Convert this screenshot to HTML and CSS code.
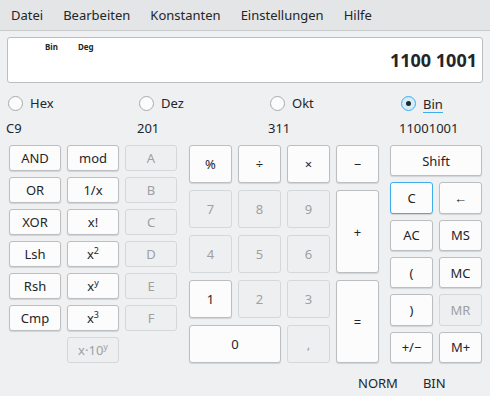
FILE: index.html
```html
<!DOCTYPE html>
<html lang="de">
<head>
  <meta charset="UTF-8" />
  <title>Rechner</title>
  <link rel="stylesheet" href="styles.css">
</head>
<body>

  <header class="menubar">
    <span>Datei</span>
    <span>Bearbeiten</span>
    <span>Konstanten</span>
    <span>Einstellungen</span>
    <span>Hilfe</span>
  </header>

  <div class="main">
    <div class="display">
      <div class="flags"><span>Bin</span><span>Deg</span></div>
      <div class="value">1100 1001</div>
    </div>

    <div class="bases">
      <label class="radio"><span class="dot"></span>Hex</label>
      <label class="radio"><span class="dot"></span>Dez</label>
      <label class="radio"><span class="dot"></span>Okt</label>
      <label class="radio checked"><span class="dot"></span><span class="focus">Bin</span></label>
    </div>

    <div class="base-values">
      <span>C9</span><span>201</span><span>311</span><span>11001001</span>
    </div>

    <div class="keypad">
      <div class="group logic">
        <div class="btn">AND</div><div class="btn">mod</div><div class="btn off">A</div>
        <div class="btn">OR</div><div class="btn">1/x</div><div class="btn off">B</div>
        <div class="btn">XOR</div><div class="btn">x!</div><div class="btn off">C</div>
        <div class="btn">Lsh</div><div class="btn">x<sup>2</sup></div><div class="btn off">D</div>
        <div class="btn">Rsh</div><div class="btn">x<sup>y</sup></div><div class="btn off">E</div>
        <div class="btn">Cmp</div><div class="btn">x<sup>3</sup></div><div class="btn off">F</div>
        <div class="empty"></div><div class="btn off">x·10<sup>y</sup></div><div class="empty"></div>
      </div>

      <div class="group numbers">
        <div class="btn">%</div><div class="btn">÷</div><div class="btn">×</div><div class="btn">−</div>
        <div class="btn off">7</div><div class="btn off">8</div><div class="btn off">9</div>
        <div class="btn tall">+</div>
        <div class="btn off">4</div><div class="btn off">5</div><div class="btn off">6</div>
        <div class="btn">1</div><div class="btn off">2</div><div class="btn off">3</div>
        <div class="btn tall">=</div>
        <div class="btn wide">0</div><div class="btn off">,</div>
      </div>

      <div class="group memory">
        <div class="btn wide">Shift</div>
        <div class="btn focused">C</div><div class="btn">←</div>
        <div class="btn">AC</div><div class="btn">MS</div>
        <div class="btn">(</div><div class="btn">MC</div>
        <div class="btn">)</div><div class="btn off">MR</div>
        <div class="btn">+/−</div><div class="btn">M+</div>
      </div>
    </div>
  </div>

  <footer class="status">
    <span>NORM</span>
    <span>BIN</span>
  </footer>

</body>
</html>
```

FILE: styles.css
```css
* {
  box-sizing: border-box;
}

:root {
  --bg: #eff0f1;
  --text: #232629;
  --border: #bcbebf;
  --accent: #3daee9;
}

body {
  margin: 0;
  width: 490px;
  height: 396px;
  overflow: hidden;
  font-family: 'Noto Sans', sans-serif;
  font-size: 13px;
  color: var(--text);
  background-color: var(--bg);
}

.menubar {
  display: flex;
  height: 31px;
  align-items: center;
  padding-left: 1px;
  background-color: #e3e5e7;
  border-bottom: 1px solid #c9cacb;
}

.menubar span {
  padding: 0 10px;
}

.main {
  padding: 6px 7px 0;
}

.display {
  position: relative;
  height: 46px;
  background-color: #fff;
  border: 1px solid var(--border);
  border-radius: 3px;
}

.display .flags {
  display: flex;
  gap: 20px;
  padding: 3px 0 0 37px;
  font-size: 8px;
  font-weight: bold;
}

.display .value {
  position: absolute;
  right: 5px;
  top: 10px;
  font-size: 18px;
  font-weight: bold;
}

.bases,
.base-values {
  display: grid;
  grid-template-columns: repeat(3, 131px) 1fr;
}

.bases {
  margin-top: 10px;
  height: 19px;
  align-items: center;
}

.radio {
  display: flex;
  align-items: center;
  gap: 7px;
  padding-left: 1px;
}

.radio .dot {
  width: 15px;
  height: 15px;
  border: 1px solid #a9aaab;
  border-radius: 50%;
  background-color: #fcfcfc;
  display: flex;
  align-items: center;
  justify-content: center;
}

.radio.checked .dot {
  border-color: var(--accent);
  background-color: #d4ebf8;
}

.radio.checked .dot::after {
  content: "";
  width: 5px;
  height: 5px;
  border-radius: 50%;
  background-color: var(--text);
}

.radio .focus {
  border-bottom: 1px solid var(--accent);
  line-height: 16px;
  margin-top: 3px;
}

.base-values {
  margin: 7px 0 0 -1px;
  height: 18px;
}

.keypad {
  display: flex;
  margin-top: 8px;
  padding-left: 2px;
}

.group {
  display: grid;
  height: 218px;
}

.logic {
  grid-template-columns: repeat(3, 52px);
  grid-template-rows: repeat(7, 1fr);
  gap: 6px;
}

.numbers {
  margin-left: 12px;
  grid-template-columns: repeat(4, 43px);
  grid-template-rows: repeat(5, 1fr);
  column-gap: 6px;
  row-gap: 7px;
}

.memory {
  margin-left: 11px;
  grid-template-columns: repeat(2, 43px);
  grid-template-rows: repeat(6, 1fr);
  column-gap: 6px;
  row-gap: 6px;
}

.btn {
  display: flex;
  align-items: center;
  justify-content: center;
  background-color: #fcfcfc;
  border: 1px solid var(--border);
  border-radius: 3px;
  box-shadow: 0 1px 1px rgba(0, 0, 0, 0.12);
}

.btn sup {
  font-size: 9px;
  line-height: 0;
  position: relative;
  top: -3px;
}

.btn.off {
  background-color: #eeeff0;
  border-color: #d6d7d8;
  color: #9fa0a1;
  box-shadow: none;
}

.btn.focused {
  border-color: var(--accent);
}

.btn.tall {
  grid-row: span 2;
}

.btn.wide {
  grid-column: span 2;
}

.numbers .tall:first-of-type {
  grid-column: 4;
}

.status {
  display: flex;
  gap: 25px;
  padding: 11px 0 0 358px;
}
```
